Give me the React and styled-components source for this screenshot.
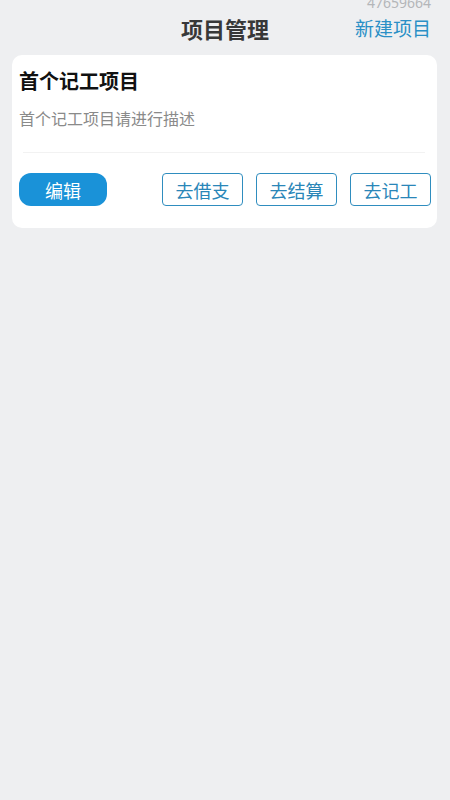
import React from "react";
import styled, { createGlobalStyle } from "styled-components";

const GlobalStyle = createGlobalStyle`
  html, body {
    margin: 0;
    padding: 0;
    background: #eeeff1;
    font-family: "Noto Sans CJK SC", "Noto Sans", sans-serif;
  }
`;

const Page = styled.div`
  min-height: 800px;
  background: #eeeff1;
  overflow: hidden;
`;

const Header = styled.div`
  position: relative;
  height: 55px;
  display: grid;
  grid-template-columns: 1fr auto 1fr;
  align-items: center;
`;

const UserId = styled.div`
  position: absolute;
  top: -6px;
  right: 19px;
  font-size: 14px;
  line-height: 18px;
  color: #b4b6b9;
  font-family: "Noto Sans", sans-serif;
`;

const Title = styled.h1`
  grid-column: 2;
  margin: 0;
  font-size: 22px;
  font-weight: 700;
  color: #383838;
  line-height: 30px;
`;

const NewLink = styled.a`
  grid-column: 3;
  justify-self: end;
  margin: 0 19px 0 0;
  font-size: 19px;
  line-height: 28px;
  color: #2a8fc6;
  cursor: pointer;
`;

const Card = styled.div`
  margin: 0 13px 0 12px;
  background: #fff;
  border-radius: 10px;
  padding: 12px 6px 22px 7px;
`;

const CardTitle = styled.div`
  font-size: 20px;
  font-weight: 700;
  line-height: 28px;
  color: #111;
`;

const CardDesc = styled.div`
  margin-top: 11px;
  font-size: 16px;
  line-height: 24px;
  color: #8a8a8a;
`;

const Divider = styled.div`
  margin: 22px 6px 0 4px;
  height: 1px;
  background: #f2f2f2;
`;

const Actions = styled.div`
  margin-top: 20px;
  display: flex;
  justify-content: space-between;
  align-items: center;
`;

const Group = styled.div`
  display: flex;
  gap: 13px;
`;

const Button = styled.button`
  height: 33px;
  box-sizing: border-box;
  font-family: inherit;
  font-size: 18px;
  line-height: 1;
  padding: 0;
  cursor: pointer;
  width: ${(p) => (p.$primary ? "88px" : "81px")};
  border-radius: ${(p) => (p.$primary ? "12px" : "4px")};
  border: ${(p) => (p.$primary ? "none" : "1.5px solid #2f8dbf")};
  background: ${(p) => (p.$primary ? "#1a92d8" : "#fff")};
  color: ${(p) => (p.$primary ? "#fff" : "#2a86b8")};
`;

export default function App() {
  return (
    <Page>
      <GlobalStyle />
      <Header>
        <UserId>47659664</UserId>
        <Title>项目管理</Title>
        <NewLink>新建项目</NewLink>
      </Header>
      <Card>
        <CardTitle>首个记工项目</CardTitle>
        <CardDesc>首个记工项目请进行描述</CardDesc>
        <Divider />
        <Actions>
          <Button $primary>编辑</Button>
          <Group>
            <Button>去借支</Button>
            <Button>去结算</Button>
            <Button>去记工</Button>
          </Group>
        </Actions>
      </Card>
    </Page>
  );
}
